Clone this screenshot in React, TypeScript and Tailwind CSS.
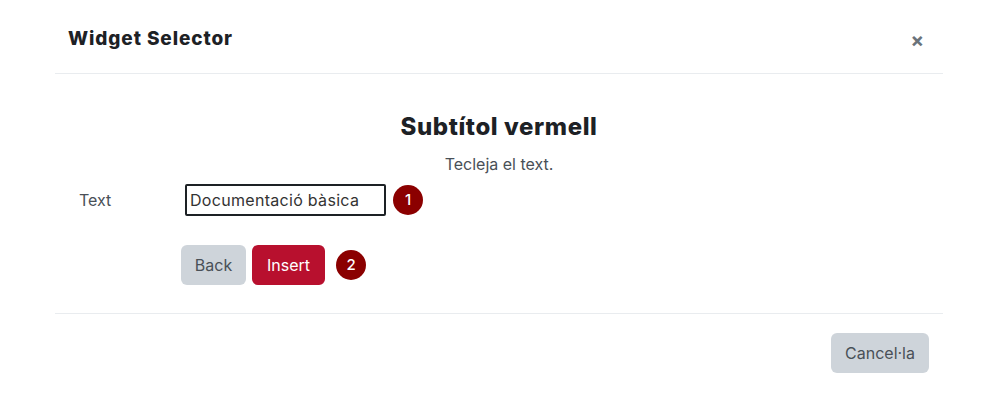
import { FC } from "react"

const Badge: FC<{ n: number }> = ({ n }) => (
  <span className="flex size-[30px] items-center justify-center rounded-full bg-[#8b0000] text-[15px] font-medium text-white">
    {n}
  </span>
)

const App: FC = () => (
  <div className="min-h-[400px] w-[998px] bg-white font-['Inter',sans-serif] text-[#1d2125]">
    <div className="mx-[55px]">
      {/* header */}
      <div className="flex h-[74px] items-center justify-between border-b border-[#e9ecef] pl-[13px] pr-[19px] pt-[6px]">
        <h2 className="text-[19px] font-extrabold tracking-[0.9px]">Widget Selector</h2>
        <span className="text-[20px] font-bold leading-none text-[#6a737b]">×</span>
      </div>

      {/* body */}
      <div className="h-[240px] border-b border-[#e9ecef] pt-[39px]">
        <h3 className="text-center text-[24px] font-extrabold leading-[28px] tracking-[0.6px]">Subtítol vermell</h3>
        <p className="mt-[13px] text-center text-[16px] leading-[20px] text-[#495057]">Tecleja el text.</p>
        <div className="mt-[10px] flex items-center">
          <label className="w-[130px] pl-[24px] text-[16px] text-[#495057]">Text</label>
          <input
            className="h-[32px] w-[201px] rounded-[2px] border-2 border-[#1d2125] px-[3px] text-[16px] tracking-[0.3px] text-[#333] outline-none"
            defaultValue="Documentació bàsica"
          />
          <span className="ml-[7px]">
            <Badge n={1} />
          </span>
        </div>
        <div className="mt-[29px] flex items-center gap-[6px] pl-[126px]">
          <button className="h-[40px] w-[65px] rounded-[6px] bg-[#ced4da] text-[16px] text-[#495057]">Back</button>
          <button className="h-[40px] w-[73px] rounded-[6px] bg-[#b8102e] text-[16px] text-white">Insert</button>
          <span className="ml-[5px]">
            <Badge n={2} />
          </span>
        </div>
      </div>

      {/* footer */}
      <div className="flex justify-end pr-[14px] pt-[19px]">
        <button className="h-[40px] w-[98px] rounded-[6px] bg-[#ced4da] text-[16px] text-[#495057]">Cancel·la</button>
      </div>
    </div>
  </div>
)

export default App
